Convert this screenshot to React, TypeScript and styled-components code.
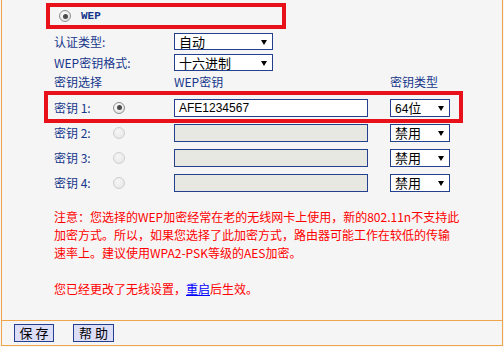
import React from 'react'
import styled, { createGlobalStyle, css } from 'styled-components'

const GlobalStyle = createGlobalStyle`
  html, body {
    margin: 0;
    padding: 0;
    background: #f5f5f5;
  }
  body {
    font-family: "Noto Sans CJK SC", "Liberation Sans", sans-serif;
    font-size: 12px;
  }
`

const Frame = styled.div`
  box-sizing: border-box;
  width: 502px;
  height: 346px;
  margin-left: 1px;
  border: 1px solid #f0a54a;
  border-top: none;
  background: #f5f5f5;
  display: flex;
  flex-direction: column;
`

const Main = styled.div`
  box-sizing: border-box;
  height: 320px;
  padding: 3px 0 0 52px;
`

const highlight = css<{ $top?: number; $bottom?: number; $left?: number; $right?: number }>`
  position: relative;
  &::after {
    content: '';
    position: absolute;
    top: ${(p) => p.$top ?? 0}px;
    bottom: ${(p) => p.$bottom ?? 0}px;
    left: ${(p) => p.$left ?? 0}px;
    right: ${(p) => p.$right ?? 0}px;
    border: 4px solid #e8111a;
    pointer-events: none;
  }
`

const ModeRow = styled.div`
  ${highlight}
  box-sizing: border-box;
  width: 240px;
  height: 26px;
  margin-left: -8px;
  padding-left: 13px;
  display: flex;
  align-items: center;
  gap: 10px;
`

const ModeName = styled.span`
  font-family: "Liberation Mono", monospace;
  font-weight: bold;
  font-size: 11px;
  color: #17378c;
`

const Row = styled.div<{ $height: number; $marked?: boolean; $top?: number; $bottom?: number; $left?: number; $right?: number }>`
  ${(p) => (p.$marked ? highlight : '')}
  display: grid;
  grid-template-columns: 59px 61px 216px 60px;
  width: 396px;
  height: ${(p) => p.$height}px;
  align-items: center;
`

const HeadRow = styled(Row)`
  align-items: start;
  line-height: 18px;
`

const Label = styled.span<{ $wide?: boolean }>`
  color: #17378c;
  font-size: 12px;
  white-space: nowrap;
  ${(p) => (p.$wide ? 'grid-column: 1 / 3;' : '')}
`

const Radio = styled.span<{ $checked?: boolean; $disabled?: boolean }>`
  box-sizing: border-box;
  width: 12px;
  height: 12px;
  border-radius: 50%;
  border: 1px solid ${(p) => (p.$disabled ? '#cfcfcf' : '#8f8f8f')};
  background: ${(p) =>
    p.$disabled
      ? 'radial-gradient(circle at 40% 35%, #f6f6f6, #e4e4e4)'
      : 'radial-gradient(circle at 40% 35%, #ffffff, #dcdcdc)'};
  display: flex;
  align-items: center;
  justify-content: center;
  &::before {
    content: '';
    display: ${(p) => (p.$checked ? 'block' : 'none')};
    width: 5px;
    height: 5px;
    border-radius: 50%;
    background: #4b4b4b;
  }
`

const Select = styled.div<{ $width: number; $height: number }>`
  position: relative;
  box-sizing: border-box;
  width: ${(p) => p.$width}px;
  height: ${(p) => p.$height}px;
  border: 1px solid #233f8e;
  background: #ffffff;
  padding-left: 4px;
  font-size: 13px;
  line-height: ${(p) => p.$height - 2}px;
  color: #000;
  &::after {
    content: '';
    position: absolute;
    right: 5px;
    top: 50%;
    margin-top: -2px;
    border-left: 3px solid transparent;
    border-right: 3px solid transparent;
    border-top: 5px solid #000;
  }
`

const Num = styled.span`
  font-family: "Liberation Sans", Arial, sans-serif;
  font-size: 12px;
`

const KeyInput = styled.div<{ $disabled?: boolean }>`
  box-sizing: border-box;
  width: 194px;
  height: 18px;
  border: 1px solid #233f8e;
  background: ${(p) => (p.$disabled ? '#e8e8e3' : '#ffffff')};
  padding-left: 4px;
  font-family: "Liberation Sans", Arial, sans-serif;
  font-size: 12px;
  line-height: 16px;
  color: #000;
`

const Notice = styled.div`
  margin-top: 13px;
  color: #ff0000;
  font-size: 12px;
  line-height: 18px;
  white-space: nowrap;
`

const Status = styled(Notice)`
  margin-top: 18px;
`

const Link = styled.a`
  color: #0000ff;
  text-decoration: underline;
`

const Footer = styled.div`
  flex: 1;
  border-top: 1px solid #f0a54a;
  padding: 3px 0 0 12px;
  display: flex;
  gap: 19px;
  align-items: flex-start;
`

const Button = styled.button<{ $width: number }>`
  box-sizing: border-box;
  width: ${(p) => p.$width}px;
  height: 18px;
  margin: 0;
  padding: 0 0 0 3px;
  border: 1px solid #233f8e;
  background: #dcdef8;
  font-family: "Noto Sans CJK SC", sans-serif;
  font-size: 13px;
  line-height: 16px;
  letter-spacing: 3px;
  color: #000;
`

const keys = [
  { name: '密钥 1:', value: 'AFE1234567', type: '64位', on: true },
  { name: '密钥 2:', value: '', type: '禁用', on: false },
  { name: '密钥 3:', value: '', type: '禁用', on: false },
  { name: '密钥 4:', value: '', type: '禁用', on: false },
]

const App = () => {
  return (
    <>
      <GlobalStyle />
      <Frame>
        <Main>
          <ModeRow>
            <Radio $checked />
            <ModeName>WEP</ModeName>
          </ModeRow>

          <Row $height={21} style={{ marginTop: 2 }}>
            <Label $wide>认证类型:</Label>
            <Select $width={99} $height={17}>自动</Select>
          </Row>
          <Row $height={21}>
            <Label $wide>WEP密钥格式:</Label>
            <Select $width={99} $height={17}>十六进制</Select>
          </Row>

          <HeadRow $height={22}>
            <Label $wide>密钥选择</Label>
            <Label>WEP密钥</Label>
            <Label>密钥类型</Label>
          </HeadRow>

          {keys.map((k) => (
            <Row
              key={k.name}
              $height={25}
              $marked={k.on}
              $top={-4}
              $bottom={-3}
              $left={-10}
              $right={-13}
            >
              <Label>{k.name}</Label>
              <Radio $checked={k.on} $disabled={!k.on} />
              <KeyInput $disabled={!k.on}>{k.value}</KeyInput>
              <Select $width={60} $height={18}>
                {k.type === '64位' ? (
                  <>
                    <Num>64</Num>位
                  </>
                ) : (
                  k.type
                )}
              </Select>
            </Row>
          ))}

          <Notice>
            <div>注意：您选择的WEP加密经常在老的无线网卡上使用，新的802.11n不支持此</div>
            <div>加密方式。所以，如果您选择了此加密方式，路由器可能工作在较低的传输</div>
            <div>速率上。建议使用WPA2-PSK等级的AES加密。</div>
          </Notice>
          <Status>
            您已经更改了无线设置，<Link href="#">重启</Link>后生效。
          </Status>
        </Main>
        <Footer>
          <Button $width={40}>保存</Button>
          <Button $width={41}>帮助</Button>
        </Footer>
      </Frame>
    </>
  )
}

export default App
